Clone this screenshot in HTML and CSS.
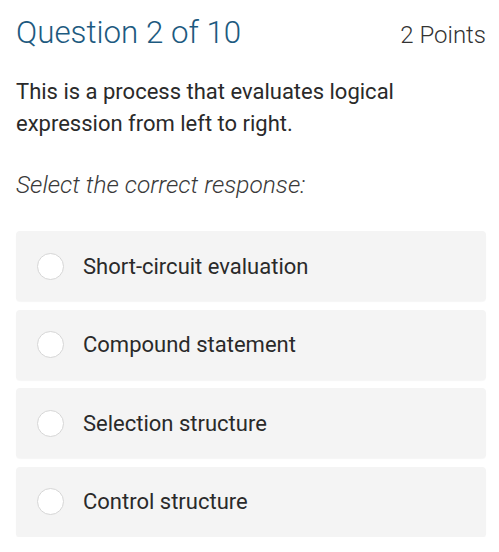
FILE: index.html
```html
<!DOCTYPE html>
<html>
<head>
<meta charset="utf-8">
<link rel="stylesheet" href="styles.css">
</head>
<body>
<div class="page">
  <div class="header">
    <h1 class="title">Question 2 of 10</h1>
    <span class="points">2 Points</span>
  </div>
  <p class="question">This is a process that evaluates logical expression from left to right.</p>
  <p class="prompt">Select the correct response:</p>
  <div class="options">
    <label class="option"><span class="radio"></span><span class="label">Short-circuit evaluation</span></label>
    <label class="option"><span class="radio"></span><span class="label">Compound statement</span></label>
    <label class="option"><span class="radio"></span><span class="label">Selection structure</span></label>
    <label class="option"><span class="radio"></span><span class="label">Control structure</span></label>
  </div>
</div>
</body>
</html>
```
FILE: styles.css
```css
html, body {
  margin: 0;
  padding: 0;
  background: #ffffff;
}
body {
  font-family: Roboto, "Liberation Sans", sans-serif;
  color: #2a2a2a;
}
.page {
  padding: 14px 13px 0 16px;
}
.header {
  display: flex;
  justify-content: space-between;
  align-items: baseline;
}
.title {
  margin: 0;
  font-size: 31.3px;
  font-weight: 300;
  color: #1d5a80;
  line-height: 38px;
}
.points {
  font-size: 24px;
  font-weight: 300;
  color: #333333;
}
.question {
  margin: 24px 0 0 0;
  font-size: 22px;
  line-height: 32px;
  color: #2a2a2a;
  padding-right: 70px;
}
.prompt {
  margin: 30px 0 0 0;
  font-size: 24.5px;
  font-weight: 300;
  font-style: italic;
  line-height: 30px;
  color: #3a3a3a;
}
.options {
  margin-top: 31px;
  display: flex;
  flex-direction: column;
  gap: 8.5px;
}
.option {
  display: flex;
  align-items: center;
  height: 70px;
  background: #f4f4f4;
  border-radius: 4px;
  box-shadow: 0 1px 1px rgba(0,0,0,0.04);
  padding-left: 21px;
}
.radio {
  width: 25px;
  height: 25px;
  border-radius: 50%;
  background: #ffffff;
  border: 1px solid #d6d6d6;
  flex: none;
}
.label {
  margin-left: 19px;
  font-size: 22px;
  color: #2a2a2a;
}
```
